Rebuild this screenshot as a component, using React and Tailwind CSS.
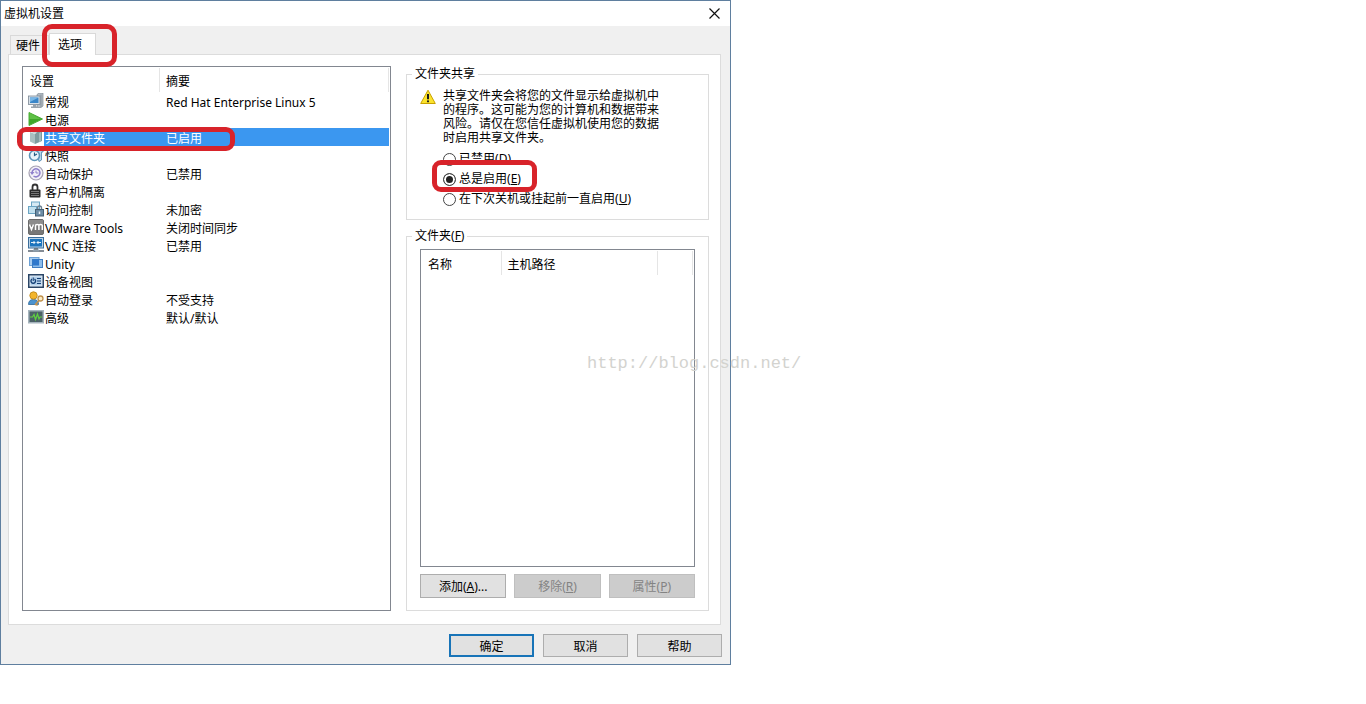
import { useState } from "react";
import clsx from "clsx";

function GeneralIcon() {
  return (
    <svg viewBox="0 0 16 16" className="w-4 h-4 shrink-0">
      <path d="M9 1.500l2-1.500h4v13l-2 1.500H9z" fill="#b4bdc5" stroke="#7f8a94" strokeWidth="0.7" />
      <path d="M13 1.500v12.500" stroke="#7f8a94" strokeWidth="0.8" />
      <rect x="0.5" y="3" width="11.500" height="8.500" fill="#d7e0e8" stroke="#7c8894" strokeWidth="0.8" />
      <rect x="2" y="4.500" width="8.500" height="5.500" fill="#3a86c8" />
      <path d="M2 4.500h8.500L2 9z" fill="#78b6e6" />
      <path d="M5 12h3v1.500h2V15H3v-1.500h2z" fill="#98a3ad" />
    </svg>
  );
}

function PowerIcon() {
  return (
    <svg viewBox="0 0 16 16" className="w-4 h-4 shrink-0">
      <path d="M1 1.500v13L14.500 8z" fill="#3fa62b" stroke="#4cae38" />
      <path d="M1.500 2v6h11z" fill="#5fc146" />
    </svg>
  );
}

function FolderIcon() {
  return (
    <svg viewBox="0 0 16 16" className="w-4 h-4 shrink-0">
      <path d="M2 3l5 2v10l-5-2.500z" fill="#a9c0c0" />
      <path d="M7 5l2-3h4l1 1v9l-7 3z" fill="#7f9c9e" />
      <path d="M3 3l5-1 1 1-2 2z" fill="#c5d6d5" />
      <path d="M13 3v9l-2 1V4z" fill="#a3bbbc" />
    </svg>
  );
}

function SnapshotIcon() {
  return (
    <svg viewBox="0 0 16 16" className="w-4 h-4 shrink-0">
      <path d="M8 3h7v2h-1.500v8L11 14.500z" fill="#b9d6e8" stroke="#5b8fb4" strokeWidth="0.9" />
      <circle cx="6.500" cy="8.500" r="5" fill="#eaf5fb" stroke="#5c94b8" strokeWidth="1.600" />
      <path d="M6.500 5.500v3l2.500-1.500" fill="none" stroke="#245c86" strokeWidth="1.200" />
      <path d="M2 2.500h5" stroke="#5c94b8" strokeWidth="1.300" />
    </svg>
  );
}

function AutoProtectIcon() {
  return (
    <svg viewBox="0 0 16 16" className="w-4 h-4 shrink-0">
      <circle cx="8" cy="8" r="7" fill="#f2f0f8" stroke="#a5a1b2" strokeWidth="1.200" />
      <path d="M4 7.500a4 4 0 1 1 1.500 3.500" fill="none" stroke="#8f80cc" strokeWidth="1.500" />
      <path d="M2 7h4.500L4 10z" fill="#8f80cc" />
      <path d="M8 5.500V8h2.500" fill="none" stroke="#8f80cc" />
    </svg>
  );
}

function IsolationIcon() {
  return (
    <svg viewBox="0 0 16 16" className="w-4 h-4 shrink-0">
      <path d="M4.500 7V4a2.500 2.500 0 0 1 5 0v3" fill="none" stroke="#333333" strokeWidth="1.800" />
      <rect x="1.500" y="6.500" width="11" height="8" rx="1" fill="#2b2b2b" />
      <path d="M3 8.500h8M3 10.500h8M3 12.500h8" stroke="#8c8c8c" strokeWidth="0.800" />
    </svg>
  );
}

function AccessIcon() {
  return (
    <svg viewBox="0 0 16 16" className="w-4 h-4 shrink-0">
      <rect x="3.500" y="1" width="8" height="7" fill="#d6eaf4" stroke="#6ba5c4" />
      <rect x="0.500" y="5.500" width="8" height="7" fill="#c2e1ef" stroke="#6ba5c4" />
      <path d="M9.500 9V7a2 2 0 0 1 4 0v2" fill="none" stroke="#6a7f90" strokeWidth="1.400" />
      <rect x="7.500" y="8.500" width="8" height="6.500" fill="#6c8ca5" stroke="#466074" />
      <path d="M11.500 10.500v2.500" stroke="#e8f0f6" strokeWidth="1.500" />
    </svg>
  );
}

function ToolsIcon() {
  return (
    <svg viewBox="0 0 16 16" className="w-4 h-4 shrink-0">
      <rect x="0.500" y="0.500" width="15" height="15" rx="1.500" fill="#777777" stroke="#6a6a6a" />
      <path d="M1 1h14v5H1z" fill="#8c8c8c" />
      <path
        d="M1.500 5.500l2 5 2-5M7.500 11V6.500q0-1 1.700-1t1.700 1V11M10.900 6.500q0-1 1.700-1t1.700 1V11"
        fill="none"
        stroke="#ffffff"
        strokeWidth="1.500"
      />
    </svg>
  );
}

function VncIcon() {
  return (
    <svg viewBox="0 0 16 16" className="w-4 h-4 shrink-0">
      <rect x="0.500" y="0.500" width="15" height="10.500" fill="#bcd3e6" stroke="#3b6e9c" />
      <rect x="2" y="2" width="12" height="7.500" fill="#1c74bd" />
      <path d="M3 5.500h4M5.500 4L7 5.500 5.500 7M13 5.500H9M10.500 4L9 5.500 10.500 7" fill="none" stroke="#ffffff" strokeWidth="0.900" />
      <path d="M6 11h4v2H6z" fill="#6d7983" />
      <path d="M0 14h16" stroke="#5a6570" strokeWidth="1.500" />
      <path d="M5 13.500h6" stroke="#8fa0ae" strokeWidth="2" />
    </svg>
  );
}

function UnityIcon() {
  return (
    <svg viewBox="0 0 16 16" className="w-4 h-4 shrink-0">
      <rect x="1.500" y="2.500" width="9.500" height="8" fill="#a9cdf0" stroke="#6ba1d6" />
      <rect x="4.500" y="4.500" width="10" height="8" fill="#8dbcea" stroke="#3f7cc0" />
      <path d="M4.500 4.500h6.500v6H4.500z" fill="#2f78cc" />
    </svg>
  );
}

function DeviceViewIcon() {
  return (
    <svg viewBox="0 0 16 16" className="w-4 h-4 shrink-0">
      <rect x="0.750" y="1.750" width="14.500" height="12.500" fill="#e4eef6" stroke="#2a4566" strokeWidth="1.500" />
      <rect x="2.500" y="3.500" width="11" height="9" fill="#b4d0ea" />
      <path d="M4 6a2.300 2.300 0 1 0 2.500 0" fill="none" stroke="#143f75" strokeWidth="1.400" />
      <path d="M5.250 4.500v3.500" stroke="#143f75" />
      <path d="M9 5.500h4M9 8h4M9 10.500h4" stroke="#143f75" strokeWidth="1.200" />
    </svg>
  );
}

function AutoLoginIcon() {
  return (
    <svg viewBox="0 0 16 16" className="w-4 h-4 shrink-0">
      <path d="M0.500 13.500q0-5 5-5t5 5z" fill="#4c93cf" stroke="#2e6899" strokeWidth="0.800" />
      <circle cx="5.500" cy="4.500" r="3.700" fill="#f3b52c" stroke="#c18a1c" strokeWidth="0.900" />
      <circle cx="12.500" cy="7.500" r="2.500" fill="#fdeec4" stroke="#c0914d" strokeWidth="1.300" />
      <path d="M11 9.500l-4 4.500M8 13l1.500 1.500" stroke="#c0914d" strokeWidth="1.600" />
    </svg>
  );
}

function AdvancedIcon() {
  return (
    <svg viewBox="0 0 16 16" className="w-4 h-4 shrink-0">
      <rect x="0.750" y="1.750" width="14.500" height="12" fill="#4b6167" stroke="#a5b4bd" strokeWidth="1.500" />
      <path d="M2 8h2.500L6 5.500l1.500 5L9.500 5l1.500 5 1-2h2" fill="none" stroke="#5fd040" strokeWidth="1.200" />
    </svg>
  );
}

function WarningIcon() {
  return (
    <svg viewBox="0 0 16 16" className="w-4 h-4 shrink-0">
      <path d="M8 1.200L15.300 14.500H0.700z" fill="#fbe32c" stroke="#c9a100" strokeLinejoin="round" />
      <path d="M8 5v5.200" stroke="#1a1a1a" strokeWidth="2" />
      <circle cx="8" cy="12.300" r="1.100" fill="#1a1a1a" />
    </svg>
  );
}

const settings = [
  { name: "常规", summary: "Red Hat Enterprise Linux 5", icon: GeneralIcon },
  { name: "电源", summary: "", icon: PowerIcon },
  { name: "共享文件夹", summary: "已启用", icon: FolderIcon, marked: true },
  { name: "快照", summary: "", icon: SnapshotIcon },
  { name: "自动保护", summary: "已禁用", icon: AutoProtectIcon },
  { name: "客户机隔离", summary: "", icon: IsolationIcon },
  { name: "访问控制", summary: "未加密", icon: AccessIcon },
  { name: "VMware Tools", summary: "关闭时间同步", icon: ToolsIcon },
  { name: "VNC 连接", summary: "已禁用", icon: VncIcon },
  { name: "Unity", summary: "", icon: UnityIcon },
  { name: "设备视图", summary: "", icon: DeviceViewIcon },
  { name: "自动登录", summary: "不受支持", icon: AutoLoginIcon },
  { name: "高级", summary: "默认/默认", icon: AdvancedIcon },
];

const sharingModes = [
  { id: "disabled", label: "已禁用", hotkey: "D" },
  { id: "always", label: "总是启用", hotkey: "E", marked: true },
  { id: "untilOff", label: "在下次关机或挂起前一直启用", hotkey: "U" },
];

// red marker drawn around its nearest relative parent
function Marker({ className }) {
  return (
    <span
      className={clsx(
        "absolute z-10 border-[#d8232a] pointer-events-none",
        className
      )}
    />
  );
}

function Hotkey({ children }) {
  return (
    <>
      (<span className="underline">{children}</span>)
    </>
  );
}

function SettingsList() {
  const [selected, setSelected] = useState("共享文件夹");

  return (
    <div className="w-[369px] min-h-[545px] shrink-0 border border-[#828790] bg-white pr-px">
      <table className="w-full table-fixed border-collapse text-left">
        <thead>
          <tr className="h-[25px]">
            <th className="w-[137px] p-0 font-normal">
              <div className="border-r border-[#e5e5e5] h-6 pl-[7px] pt-1 leading-5">设置</div>
            </th>
            <th className="p-0 font-normal">
              <div className="border-r border-[#e5e5e5] h-6 pl-[6px] pt-1 leading-5">摘要</div>
            </th>
          </tr>
        </thead>
        <tbody>
          {settings.map((item) => {
            const active = item.name === selected;
            const Icon = item.icon;
            return (
              <tr
                key={item.name}
                aria-selected={active}
                onClick={() => setSelected(item.name)}
                className="h-[18px]"
              >
                <td className="p-0 relative">
                  <div className="flex items-center h-[18px] pl-[5px]">
                    <Icon />
                    <span
                      className={clsx(
                        "flex-1 pl-px pt-[3px] leading-[15px] whitespace-nowrap",
                        active && "bg-[#3b97f0] text-white"
                      )}
                    >
                      {item.name}
                    </span>
                  </div>
                  {item.marked && (
                    <Marker className="-left-1.5 -top-px w-[218px] h-6 border-5 rounded-[9px]" />
                  )}
                </td>
                <td
                  className={clsx(
                    "p-0 pl-[6px] pt-[3px] leading-[15px] whitespace-nowrap",
                    active && "bg-[#3b97f0] text-white"
                  )}
                >
                  {item.summary}
                </td>
              </tr>
            );
          })}
        </tbody>
      </table>
    </div>
  );
}

function SharingGroup() {
  const [mode, setMode] = useState("always");

  return (
    <fieldset className="border border-[#dcdcdc] px-[13px] pb-2.5 min-w-0">
      <legend className="-ml-2 px-[3px] leading-[14px]">文件夹共享</legend>
      <div className="flex gap-[7px] pt-2">
        <WarningIcon />
        <p className="w-[218px] leading-[14px]">
          共享文件夹会将您的文件显示给虚拟机中的程序。这可能为您的计算机和数据带来风险。请仅在您信任虚拟机使用您的数据时启用共享文件夹。
        </p>
      </div>
      <div className="flex flex-col items-start pl-[23px] pt-1">
        {sharingModes.map((item) => (
          <label key={item.id} className="relative flex items-center gap-[3px] h-5">
            <input
              type="radio"
              name="sharing"
              checked={mode === item.id}
              onChange={() => setMode(item.id)}
              className="appearance-none w-[13px] h-[13px] rounded-full border border-[#444444] bg-white checked:bg-[#222222] checked:shadow-[inset_0_0_0_2px_white]"
            />
            <span>
              {item.label}
              <Hotkey>{item.hotkey}</Hotkey>
            </span>
            {item.marked && (
              <Marker className="-left-[11px] -top-[9px] w-[105px] h-8 border-5 rounded-[9px]" />
            )}
          </label>
        ))}
      </div>
    </fieldset>
  );
}

function ListButton({ disabled, children }) {
  return (
    <button
      type="button"
      disabled={disabled}
      className="flex-1 h-6 pt-0.5 border border-[#adadad] bg-[#e1e1e1] disabled:border-[#bfbfbf] disabled:bg-[#cccccc] disabled:text-[#838383]"
    >
      {children}
    </button>
  );
}

function FoldersGroup() {
  return (
    <fieldset className="flex flex-col flex-1 border border-[#dcdcdc] px-[13px] pb-3 min-w-0">
      <legend className="-ml-2 px-[3px] leading-[14px]">
        文件夹<Hotkey>F</Hotkey>
      </legend>
      <div className="mt-1.5 min-h-[318px] border border-[#828790] bg-white pt-px pr-px">
        <table className="w-full table-fixed border-collapse text-left">
          <thead>
            <tr className="h-6">
              <th className="w-20 p-0 pl-[7px] pt-1 border-r border-[#e5e5e5] font-normal">名称</th>
              <th className="w-[156px] p-0 pl-[6px] pt-1 border-r border-[#e5e5e5] font-normal">主机路径</th>
              <th className="p-0 border-r border-[#e5e5e5]"></th>
            </tr>
          </thead>
          <tbody></tbody>
        </table>
      </div>
      <div className="flex gap-2 mt-[7px]">
        <ListButton>
          添加<Hotkey>A</Hotkey>...
        </ListButton>
        <ListButton disabled>
          移除<Hotkey>R</Hotkey>
        </ListButton>
        <ListButton disabled>
          属性<Hotkey>P</Hotkey>
        </ListButton>
      </div>
    </fieldset>
  );
}

function App() {
  return (
    <div className="min-h-screen bg-white text-black text-xs font-['Noto_Sans','Noto_Sans_CJK_SC',sans-serif]">
      <div className="relative w-full max-w-[731px] border border-[#5f7f9f] bg-[#f0f0f0]">
        <header className="flex items-center justify-between h-[25px] bg-white pl-[3px] pr-2">
          <h1>虚拟机设置</h1>
          <button type="button" aria-label="关闭" className="p-0.5">
            <svg viewBox="0 0 11 11" className="w-[11px] h-[11px]">
              <path d="M0.500 0.500l10 10M10.500 0.500l-10 10" stroke="#111111" strokeWidth="1.200" />
            </svg>
          </button>
        </header>

        <div className="pl-[7px] pr-[9px] pt-[7px]">
          <div role="tablist" className="flex items-end h-[21px] pl-0.5">
            <button
              type="button"
              role="tab"
              aria-selected="false"
              className="w-[39px] h-[19px] pl-[5px] pt-0.5 text-left whitespace-nowrap border border-b-0 border-[#d9d9d9] bg-[#f0f0f0]"
            >
              硬件
            </button>
            <button
              type="button"
              role="tab"
              aria-selected="true"
              className="relative w-[47px] h-[22px] -mb-px pl-2 text-left border border-b-0 border-[#d9d9d9] bg-white"
            >
              选项
              <Marker className="-left-2 -top-2.5 w-[75px] h-[43px] border-5 rounded-[10px]" />
            </button>
          </div>
          <div className="flex gap-[15px] border border-[#dcdcdc] bg-white pt-[11px] pr-[11px] pb-[13px] pl-[13px]">
            <SettingsList />
            <div className="flex flex-col flex-1 gap-[9px] pt-px min-w-0">
              <SharingGroup />
              <FoldersGroup />
            </div>
          </div>
        </div>

        <footer className="flex justify-end gap-[9px] pt-[9px] pb-[7px] pr-2">
          <button type="button" className="w-[85px] h-[23px] pt-0.5 border-2 border-[#1874b8] bg-[#e1e1e1]">
            确定
          </button>
          <button type="button" className="w-[85px] h-[23px] pt-0.5 border border-[#adadad] bg-[#e1e1e1]">
            取消
          </button>
          <button type="button" className="w-[85px] h-[23px] pt-0.5 border border-[#adadad] bg-[#e1e1e1]">
            帮助
          </button>
        </footer>

        <span className="absolute left-[586px] top-[351px] text-[17px] leading-6 text-[#d3d3cf] whitespace-nowrap pointer-events-none font-['Liberation_Mono',monospace]">
          http://blog.csdn.net/
        </span>
      </div>
    </div>
  );
}

export default App;
